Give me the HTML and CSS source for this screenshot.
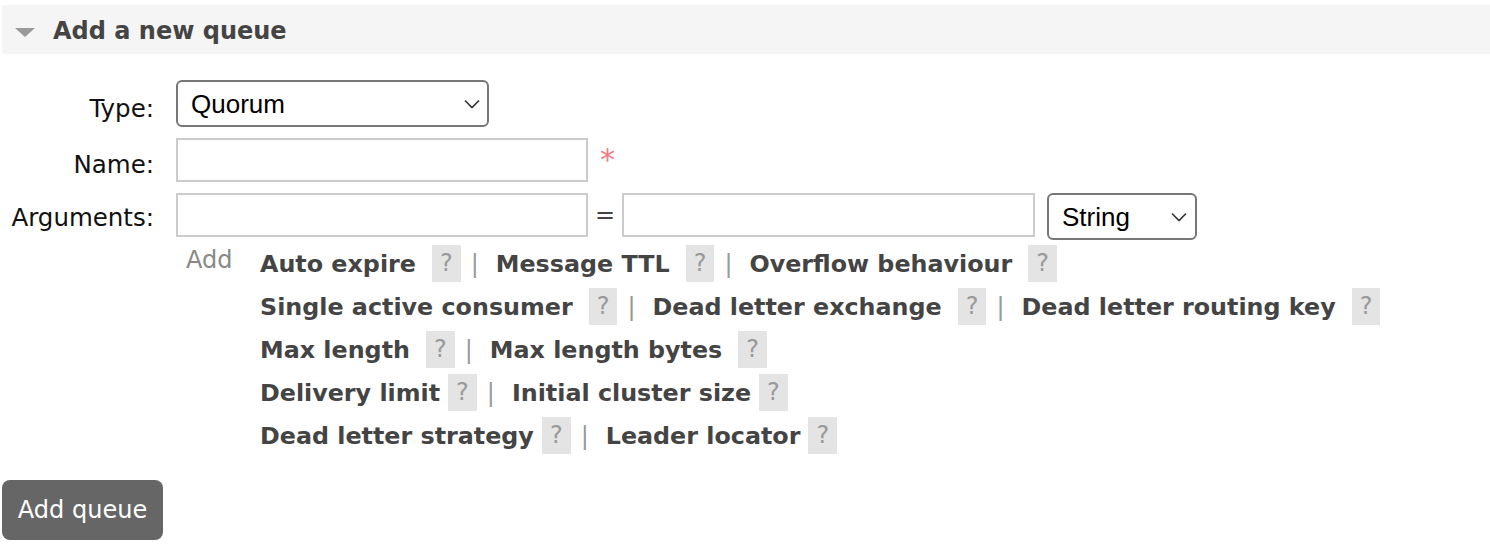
FILE: index.html
```html
<!DOCTYPE html>
<html lang="en">
<head>
<meta charset="utf-8">
<title>Add a new queue</title>
<link rel="stylesheet" href="styles.css">
</head>
<body>
<div class="page">
  <h2 class="section-header">
    <svg class="toggle" width="20" height="9" viewBox="0 0 20 9" aria-hidden="true"><polygon points="0,0 20,0 10,9" fill="#9a9a9a"/></svg>
    <span class="section-title">Add a new queue</span>
  </h2>
  <form class="queue-form">
    <div class="form-grid">
      <label class="field-label label-type">Type:</label>
      <div class="field">
        <div class="select-wrap select-type">
          <select class="select"><option>Quorum</option><option>Classic</option><option>Stream</option></select>
          <svg class="chevron" width="16" height="9" viewBox="0 0 16 9" aria-hidden="true"><polyline points="1,1 8,8 15,1" fill="none" stroke="#333" stroke-width="1.6"/></svg>
        </div>
      </div>

      <label class="field-label label-name">Name:</label>
      <div class="field field-name">
        <input class="text-input" type="text">
        <span class="mandatory">*</span>
      </div>

      <label class="field-label label-args">Arguments:</label>
      <div class="field">
        <div class="arg-row">
          <input class="text-input" type="text">
          <span class="equals">=</span>
          <input class="text-input" type="text">
          <div class="select-wrap select-string">
            <select class="select"><option>String</option><option>Number</option><option>Boolean</option><option>List</option></select>
            <svg class="chevron" width="16" height="9" viewBox="0 0 16 9" aria-hidden="true"><polyline points="1,1 8,8 15,1" fill="none" stroke="#333" stroke-width="1.6"/></svg>
          </div>
        </div>
        <div class="arg-help">
          <span class="add-arg">Add</span>
          <div class="arg-lines">
            <div class="arg-line"><span class="arg-link">Auto expire</span><span class="help">?</span><span class="sep">|</span><span class="arg-link">Message TTL</span><span class="help">?</span><span class="sep">|</span><span class="arg-link">Overflow behaviour</span><span class="help">?</span></div>
            <div class="arg-line"><span class="arg-link">Single active consumer</span><span class="help">?</span><span class="sep">|</span><span class="arg-link">Dead letter exchange</span><span class="help">?</span><span class="sep">|</span><span class="arg-link">Dead letter routing key</span><span class="help">?</span></div>
            <div class="arg-line"><span class="arg-link">Max length</span><span class="help">?</span><span class="sep">|</span><span class="arg-link">Max length bytes</span><span class="help">?</span></div>
            <div class="arg-line"><span class="arg-link">Delivery limit</span><span class="help tight">?</span><span class="sep">|</span><span class="arg-link">Initial cluster size</span><span class="help tight">?</span></div>
            <div class="arg-line"><span class="arg-link">Dead letter strategy</span><span class="help tight">?</span><span class="sep">|</span><span class="arg-link">Leader locator</span><span class="help tight">?</span></div>
          </div>
        </div>
      </div>
    </div>
    <button class="add-button" type="button">Add queue</button>
  </form>
</div>
</body>
</html>
```

FILE: styles.css
```css
html, body {
  margin: 0;
  padding: 0;
  background: #fff;
}
body {
  font-family: "DejaVu Sans", Verdana, sans-serif;
  font-size: 24px;
  line-height: 28px;
  color: #111;
}
.page {
  padding-left: 2px;
}
.section-header {
  margin: 5px 0 0;
  height: 49px;
  box-sizing: border-box;
  padding: 2px 0 0 13px;
  background: #f5f5f5;
  display: flex;
  align-items: center;
  font-size: 24px;
  font-weight: bold;
  color: #444;
  line-height: 28px;
}
.toggle {
  margin-top: 4px;
  margin-right: 18px;
  flex: none;
}
.queue-form {
  margin-top: 26px;
}
.form-grid {
  display: grid;
  grid-template-columns: 152px auto;
  column-gap: 22px;
  row-gap: 11px;
  align-items: start;
}
.field-label {
  text-align: right;
  font-size: 24.5px;
  line-height: 28px;
  color: #111;
}
.label-type { padding-top: 15px; }
.label-name { padding-top: 13px; }
.label-args { padding-top: 11px; }
.field {
  display: flex;
  flex-direction: column;
  align-items: flex-start;
}
.field-name {
  flex-direction: row;
}
.select-wrap {
  position: relative;
  flex: none;
}
.select {
  -webkit-appearance: none;
  appearance: none;
  display: block;
  box-sizing: border-box;
  height: 47px;
  margin: 0;
  padding: 0 0 0 13px;
  border: 2px solid #777;
  border-radius: 6px;
  background: #fff;
  font-family: "Liberation Sans", Arial, sans-serif;
  font-size: 26px;
  color: #000;
}
.select-type .select { width: 313px; }
.select-string .select { width: 150px; }
.chevron {
  position: absolute;
  top: 50%;
  transform: translateY(-50%);
  pointer-events: none;
}
.select-type .chevron { right: 9px; }
.select-string .chevron { right: 10px; }
.text-input {
  box-sizing: border-box;
  width: 412px;
  height: 44px;
  margin: 0;
  padding: 0 8px;
  border: 2px solid #ccc;
  border-radius: 0;
  background: #fff;
  font-family: "DejaVu Sans", Verdana, sans-serif;
  font-size: 24px;
}
.arg-row .text-input + .equals + .text-input { width: 413px; }
.mandatory {
  margin-left: 12px;
  margin-top: 7px;
  font-size: 30px;
  line-height: 30px;
  color: #f08080;
}
.arg-row {
  display: flex;
  align-items: flex-start;
}
.equals {
  width: 34px;
  text-align: center;
  padding-top: 8px;
  line-height: 28px;
  color: #444;
}
.select-string {
  margin-left: 12px;
}
.arg-help {
  display: flex;
  align-items: flex-start;
  margin-top: 2px;
}
.add-arg {
  width: 74px;
  padding-left: 10px;
  padding-top: 4px;
  color: #888;
  line-height: 28px;
}
.arg-lines {
  display: flex;
  flex-direction: column;
}
.arg-line {
  display: flex;
  align-items: center;
  height: 43px;
  white-space: nowrap;
}
.arg-link {
  font-weight: bold;
  font-size: 23.8px;
  color: #444;
  line-height: 28px;
}
.help {
  margin-left: 16px;
  padding: 4px 8px;
  line-height: 29px;
  background: #e4e4e4;
  color: #999;
}
.help.tight {
  margin-left: 8px;
}
.sep {
  margin: 0 17px 0 10px;
  color: #999;
  line-height: 28px;
}
.add-button {
  display: block;
  margin: 23px 0 0;
  box-sizing: border-box;
  width: 161px;
  height: 60px;
  padding: 0;
  border: 0;
  border-radius: 8px;
  background: #666;
  color: #fff;
  font-family: "DejaVu Sans", Verdana, sans-serif;
  font-size: 24px;
  line-height: 28px;
  text-align: center;
}
```
